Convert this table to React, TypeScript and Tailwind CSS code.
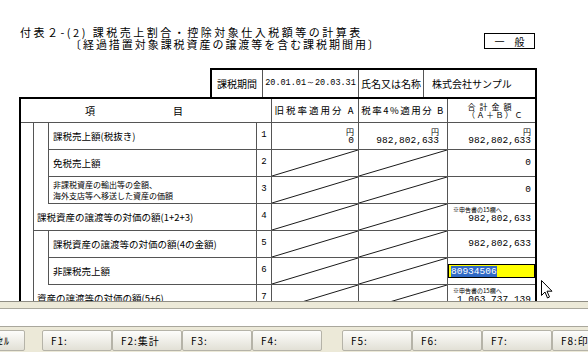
import React from "react";

type Row = {
  no: number;
  label: string | string[];
  a?: string;
  b?: string;
  c?: string;
  yen?: boolean;
  note?: boolean;
  input?: string;
};

const jp = "font-['Noto_Sans_CJK_JP',sans-serif]";
const mono = "font-['Liberation_Mono',monospace]";

const rows: Row[] = [
  { no: 1, label: "課税売上額(税抜き)", a: "0", b: "982,802,633", c: "982,802,633", yen: true },
  { no: 2, label: "免税売上額", c: "0" },
  { no: 3, label: ["非課税資産の輸出等の金額、", "海外支店等へ移送した資産の価額"], c: "0" },
  { no: 4, label: "課税資産の譲渡等の対価の額(1+2+3)", c: "982,802,633", note: true },
  { no: 5, label: "課税資産の譲渡等の対価の額(4の金額)", c: "982,802,633" },
  { no: 6, label: "非課税売上額", input: "80934506" },
  { no: 7, label: "資産の譲渡等の対価の額(5+6)", c: "1,063,737,139", note: true },
];

const buttons = [
  ["F1:", "F2:集計", "F3:", "F4:"],
  ["F5:", "F6:", "F7:", "F8:印刷"],
];

// diagonal "not applicable" stroke drawn across a cell
const Slash = () => (
  <svg className="absolute inset-0 h-full w-full" viewBox="0 0 100 100" preserveAspectRatio="none">
    <line x1="0" y1="100" x2="100" y2="0" stroke="#1a1a1a" strokeWidth="1" vectorEffect="non-scaling-stroke" />
  </svg>
);

const Amount = ({ value, yen, pr = "pr-[4px]" }: { value: string; yen?: boolean; pr?: string }) => (
  <div className={`flex h-full flex-col items-end justify-center ${pr}`}>
    {yen && <span className={`${jp} text-[8px] leading-[9px]`}>円</span>}
    <span className={`${mono} text-[9.5px] leading-[10px]`}>{value}</span>
  </div>
);

const Cells = ({ r }: { r: Row }) => (
  <>
    <div className={`${mono} flex w-[15px] items-center justify-center border-l border-[#555] text-[9px]`}>{r.no}</div>
    <div className="relative w-[87px] border-l border-[#555]">
      {r.no === 1 ? <Amount value={r.a ?? ""} yen /> : <Slash />}
    </div>
    <div className="relative w-[89px] border-l border-[#555]">
      {r.no === 1 ? <Amount value={r.b ?? ""} yen pr="pr-[8px]" /> : <Slash />}
    </div>
    <div className="relative w-[88px] border-l border-[#555]">
      {r.input ? (
        <div className="flex h-full items-center">
          <div className="flex h-[14px] w-full items-center border border-black bg-[#ffff00] pl-[2px]">
            <span className={`${mono} bg-[#316ac5] text-[9.5px] leading-[11px] text-white`}>{r.input}</span>
          </div>
        </div>
      ) : r.note ? (
        <div className="flex h-full flex-col">
          <span className={`${jp} pl-[5px] pt-[2px] text-[6px] leading-[7px]`}>※申告書の15欄へ</span>
          <span className={`${mono} self-end pr-[4px] text-[9.5px] leading-[12px]`}>{r.c}</span>
        </div>
      ) : (
        <Amount value={r.c ?? ""} yen={r.yen} />
      )}
    </div>
  </>
);

const Label = ({ r }: { r: Row }) =>
  Array.isArray(r.label) ? (
    <div className="flex flex-col justify-center text-[8px] leading-[11px]">
      {r.label.map((l) => (
        <span key={l}>{l}</span>
      ))}
    </div>
  ) : (
    <span className="text-[9.5px]">{r.label}</span>
  );

const TableRow = ({ r, pl }: { r: Row; pl: string }) => (
  <div className="flex h-[27px] border-b border-[#555]">
    <div className={`flex flex-1 items-center ${pl}`}>
      <Label r={r} />
    </div>
    <Cells r={r} />
  </div>
);

const Group = ({ items }: { items: Row[] }) => (
  <div className="flex">
    <div className="w-[15px] border-r border-[#555]" />
    <div className="flex-1">
      {items.map((r) => (
        <TableRow key={r.no} r={r} pl="pl-[4px]" />
      ))}
    </div>
  </div>
);

const Btn = ({ label, className = "" }: { label: string; className?: string }) => (
  <div
    className={`flex h-[21px] w-[70px] shrink-0 items-center rounded-[2px] border border-[#b5b3a8] bg-gradient-to-b from-[#fdfdfb] to-[#e2e0d6] pl-[8px] text-[10px] tracking-[1px] ${className}`}
  >
    {label}
  </div>
);

export default function App() {
  return (
    <div className={`${jp} relative h-[352px] w-[588px] overflow-hidden bg-white text-black`}>
      {/* form area */}
      <div className="h-[301px] overflow-hidden">
        <div className="flex h-[68px] pt-[26px]">
          <div className="text-[11px] leading-[12px]">
            <div className="pl-[20px] tracking-[2.5px]">付表２-(2) 課税売上割合・控除対象仕入税額等の計算表</div>
            <div className="pl-[70px] tracking-[1.95px]">〔経過措置対象課税資産の譲渡等を含む課税期間用〕</div>
          </div>
          <div className="ml-auto mr-[53px] mt-[7px] flex h-[16px] w-[51px] items-center justify-center border border-black text-[10px]">
            一　般
          </div>
        </div>

        <div className="ml-[210px] flex h-[29px] w-[327px] border-l-2 border-r-2 border-t-2 border-black text-[10px]">
          <div className="flex w-[51px] items-center justify-center border-r border-[#555]">課税期間</div>
          <div className={`${mono} flex w-[96px] items-center justify-center border-r border-[#555] text-[8.5px]`}>
            20.01.01～20.03.31
          </div>
          <div className="flex w-[65px] items-center justify-center border-r border-[#555]">氏名又は名称</div>
          <div className="flex flex-1 items-center pl-[8px]">株式会社サンプル</div>
        </div>

        <div className="ml-[19px] w-[518px] border-2 border-black">
          <div className="flex h-[24px] border-b border-[#555]">
            <div className="flex flex-1 items-center gap-[78px] pl-[64px] text-[10px]">
              <span>項</span>
              <span>目</span>
            </div>
            <div className="flex w-[87px] items-center justify-center border-l border-[#555] text-[9.5px] tracking-[2px]">
              旧税率適用分 A
            </div>
            <div className="flex w-[89px] items-center justify-center border-l border-[#555] text-[9.5px] tracking-[1.5px]">
              税率4%適用分 B
            </div>
            <div className="flex w-[88px] flex-col items-center justify-center border-l border-[#555] text-[8px] leading-[8px]">
              <span className="tracking-[4px]">合計金額</span>
              <span className="pl-[8px] tracking-[1.5px]">（Ａ＋Ｂ）Ｃ</span>
            </div>
          </div>

          <div className="flex">
            <div className="w-[13px] border-r border-[#555]" />
            <div className="flex-1">
              <Group items={rows.slice(0, 3)} />
              <TableRow r={rows[3]} pl="pl-[3px]" />
              <Group items={rows.slice(4, 6)} />
              <TableRow r={rows[6]} pl="pl-[3px]" />
            </div>
          </div>
        </div>
      </div>

      {/* function key bar */}
      <div className="border-t border-[#8f8d84] bg-[#ece9d8]">
        <div className="h-[6px]" />
        <div className="h-[19px] border-y border-[#a9a79c] bg-white" />
        <div className="flex h-[25px] items-center pt-[1px]">
          <Btn label="ｷｬﾝｾﾙ" className="-ml-[45px] mr-[17px] justify-end pr-[14px]" />
          {buttons[0].map((b) => (
            <Btn key={b} label={b} />
          ))}
          <div className="w-[20px] shrink-0" />
          {buttons[1].map((b) => (
            <Btn key={b} label={b} />
          ))}
        </div>
      </div>

      {/* mouse pointer */}
      <svg className="absolute left-[541px] top-[280px]" width="12" height="19" viewBox="0 0 12 19">
        <path d="M0.5 0.5 L0.5 15.5 L4 12 L6.5 18 L8.5 17 L6 11.2 L11 11.2 Z" fill="white" stroke="black" strokeWidth="1" />
      </svg>
    </div>
  );
}
